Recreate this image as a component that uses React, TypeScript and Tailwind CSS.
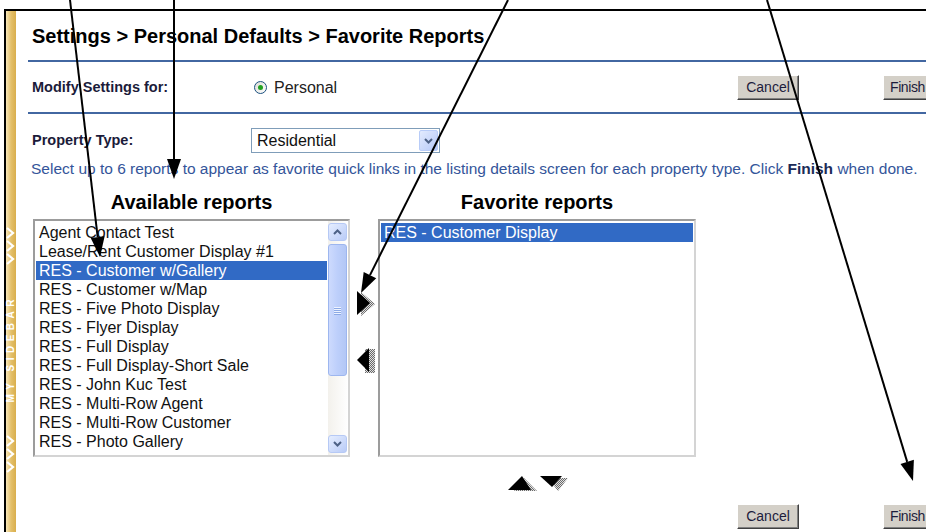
import React from "react";

const AVAILABLE = [
  "Agent Contact Test",
  "Lease/Rent Customer Display #1",
  "RES - Customer w/Gallery",
  "RES - Customer w/Map",
  "RES - Five Photo Display",
  "RES - Flyer Display",
  "RES - Full Display",
  "RES - Full Display-Short Sale",
  "RES - John Kuc Test",
  "RES - Multi-Row Agent",
  "RES - Multi-Row Customer",
  "RES - Photo Gallery",
];

const FAVORITES = ["RES - Customer Display"];

// Callout lines drawn across the page
const CALLOUTS = [
  { x1: 70, y1: 0, x2: 100, y2: 257 },
  { x1: 174, y1: 0, x2: 174, y2: 179 },
  { x1: 508, y1: 0, x2: 361, y2: 293 },
  { x1: 767, y1: 0, x2: 913, y2: 481 },
];

function Callouts() {
  const L = 20;
  const W = 7;
  return (
    <svg className="absolute inset-0 pointer-events-none" width={926} height={532}>
      {CALLOUTS.map((c, i) => {
        const dx = c.x2 - c.x1;
        const dy = c.y2 - c.y1;
        const len = Math.hypot(dx, dy);
        const ux = dx / len;
        const uy = dy / len;
        const bx = c.x2 - ux * L;
        const by = c.y2 - uy * L;
        const nx = -uy;
        const ny = ux;
        const pts = `${c.x2},${c.y2} ${bx + nx * W},${by + ny * W} ${bx - nx * W},${by - ny * W}`;
        return (
          <g key={i}>
            <line x1={c.x1} y1={c.y1} x2={bx} y2={by} stroke="#000" strokeWidth={2} />
            <polygon points={pts} fill="#000" />
          </g>
        );
      })}
    </svg>
  );
}

function Chevrons() {
  return (
    <svg width={10} height={40} viewBox="0 0 10 40">
      {[0, 13, 26].map((y) => (
        <polyline key={y} points={`1,${y + 2} 7,${y + 7} 1,${y + 12}`} fill="none" stroke="#fff" strokeWidth={2.2} />
      ))}
    </svg>
  );
}

function Sidebar() {
  return (
    <div className="w-[10px] shrink-0 bg-gradient-to-r from-[#f6e6b8] via-[#e4c06a] to-[#d9ae4c] flex flex-col items-center pt-[215px]">
      <Chevrons />
      <div className="mt-[22px] h-[122px] flex items-center justify-center">
        <span className="[writing-mode:vertical-rl] rotate-180 text-white font-bold text-[10px] tracking-[4.5px] leading-[10px] whitespace-nowrap">
          MY SIDEBAR
        </span>
      </div>
      <div className="mt-[24px]">
        <Chevrons />
      </div>
    </div>
  );
}

function XpButton({ label, tight }: { label: string; tight?: boolean }) {
  return (
    <div
      className={
        tight
          ? "w-[62px] h-[25px] shrink-0 bg-[#d4d0c8] border border-t-white border-l-white border-r-[#404040] border-b-[#404040] shadow-[inset_-1px_-1px_0_#808080] flex items-center justify-start pl-[6px] text-[14px] tracking-[-0.4px] text-[#1c1c3c]"
          : "w-[62px] h-[25px] shrink-0 bg-[#d4d0c8] border border-t-white border-l-white border-r-[#404040] border-b-[#404040] shadow-[inset_-1px_-1px_0_#808080] flex items-center justify-center text-[14px] text-[#1c1c3c]"
      }
    >
      {label}
    </div>
  );
}

function Radio() {
  return (
    <div className="w-[13px] h-[13px] rounded-full border border-[#1c5180] bg-gradient-to-br from-[#dcdcd6] to-white flex items-center justify-center">
      <div className="w-[5px] h-[5px] rounded-full bg-[#21a121]" />
    </div>
  );
}

function ScrollArrow({ up }: { up: boolean }) {
  return (
    <div className="h-[18px] rounded-[3px] border border-[#b6c9f5] bg-gradient-to-br from-[#e6eeff] to-[#b9cbf7] flex items-center justify-center">
      <svg width={9} height={6} viewBox="0 0 9 6">
        <polyline
          points={up ? "1,5 4.5,1.5 8,5" : "1,1 4.5,4.5 8,1"}
          fill="none"
          stroke="#4d6185"
          strokeWidth={2}
        />
      </svg>
    </div>
  );
}

function Scrollbar() {
  return (
    <div className="w-[19px] mr-[1px] shrink-0 flex flex-col bg-gradient-to-r from-[#f3f1ec] to-[#fefefe] pt-[2px] pb-[2px]">
      <ScrollArrow up />
      <div className="mt-[3px] h-[132px] rounded-[3px] border border-[#9db6ef] bg-gradient-to-r from-[#cddafd] via-[#bdcffb] to-[#b3c7f5] flex flex-col items-center justify-center gap-[1px]">
        {[0, 1, 2, 3].map((i) => (
          <div key={i} className="w-[7px] h-[1px] bg-[#eef3ff] shadow-[0_1px_0_#8caae6]" />
        ))}
      </div>
      <div className="flex-1" />
      <ScrollArrow up={false} />
    </div>
  );
}

function ListItems({ items, selected }: { items: string[]; selected: string }) {
  return (
    <div className="flex-1 pt-[2px] pl-[1px] pr-[1px]">
      {items.map((t) => (
        <div
          key={t}
          className={
            t === selected
              ? "h-[19px] leading-[19px] pl-[3px] text-[16px] whitespace-nowrap bg-[#316ac5] text-white"
              : "h-[19px] leading-[19px] pl-[3px] text-[16px] whitespace-nowrap text-[#111]"
          }
        >
          {t}
        </div>
      ))}
    </div>
  );
}

// Shaded triangle used for the move buttons
function MoveArrow({ dir }: { dir: "right" | "left" | "up" | "down" }) {
  const shapes: Record<string, { w: number; h: number; black: string; shade: string }> = {
    right: { w: 19, h: 26, black: "0,0 13,12 0,24", shade: "4,1 18,13 4,25" },
    left: { w: 19, h: 26, black: "0,12 12,0 12,24", shade: "8,1 18,1 18,25 8,25" },
    up: { w: 30, h: 16, black: "0,14 14,0 23,14", shade: "6,15 16,2 29,15" },
    down: { w: 30, h: 16, black: "0,0 22,0 12,11", shade: "8,2 28,2 18,15" },
  };
  const s = shapes[dir];
  const pid = `hatch-${dir}`;
  return (
    <svg width={s.w} height={s.h} viewBox={`0 0 ${s.w} ${s.h}`}>
      <defs>
        <pattern id={pid} width={2} height={2} patternUnits="userSpaceOnUse">
          <rect width={2} height={2} fill="#e0e0e0" />
          <rect width={1} height={1} fill="#6a6a6a" />
          <rect x={1} y={1} width={1} height={1} fill="#6a6a6a" />
        </pattern>
      </defs>
      <polygon points={s.shade} fill={`url(#${pid})`} />
      <polygon points={s.black} fill="#000" />
    </svg>
  );
}

export default function App() {
  return (
    <div className="w-[926px] h-[532px] bg-white relative overflow-hidden font-['Liberation_Sans',Arial,sans-serif]">
      <div className="pt-[9px] pl-[4px]">
        <div className="h-[523px] border-t-2 border-l-2 border-black flex">
          <Sidebar />
          <div className="flex-1 min-w-0 flex flex-col">
            <div className="pt-[14px] pl-[16px] text-[20px] leading-[23px] font-bold text-black whitespace-nowrap">
              Settings &gt; Personal Defaults &gt; Favorite Reports
            </div>
            <div className="mt-[12px] ml-[12px] h-[2px] bg-[#4267a1]" />

            <div className="h-[50px] pt-[1px] pl-[16px] flex items-center whitespace-nowrap">
              <div className="w-[222px] shrink-0 text-[14.5px] font-bold text-[#1b1b3a]">Modify Settings for:</div>
              <div className="w-[483px] shrink-0 flex items-center gap-[7px]">
                <Radio />
                <span className="text-[16px] text-[#222]">Personal</span>
              </div>
              <XpButton label="Cancel" />
              <div className="ml-[84px]">
                <XpButton label="Finish" tight />
              </div>
            </div>
            <div className="ml-[12px] h-[2px] bg-[#4267a1]" />

            <div className="mt-[14px] h-[25px] pl-[16px] flex items-center whitespace-nowrap">
              <div className="w-[219px] shrink-0 text-[14.5px] font-bold text-[#1b1b3a]">Property Type:</div>
              <div className="w-[189px] h-[25px] border border-[#7f9db9] bg-white flex items-center">
                <span className="flex-1 pl-[5px] text-[16px] text-[#111]">Residential</span>
                <div className="w-[19px] h-[21px] mr-[1px] rounded-[2px] border border-[#b8ccf8] bg-gradient-to-br from-[#e3ebfe] to-[#b6c9f7] flex items-center justify-center">
                  <svg width={9} height={6} viewBox="0 0 9 6">
                    <polyline points="1,1 4.5,4.5 8,1" fill="none" stroke="#4d6185" strokeWidth={2} />
                  </svg>
                </div>
              </div>
            </div>

            <div className="mt-[7px] pl-[15px] text-[15.5px] leading-[17px] text-[#34559a] whitespace-nowrap">
              Select up to 6 reports to appear as favorite quick links in the listing details screen for each property type. Click{" "}
              <b className="text-[#1b2b57]">Finish</b> when done.
            </div>

            <div className="mt-[14px] pl-[17px] flex text-[20px] leading-[23px] font-bold text-black">
              <div className="w-[317px] text-center">Available reports</div>
              <div className="w-[28px]" />
              <div className="w-[318px] text-center">Favorite reports</div>
            </div>

            <div className="mt-[5px] pl-[17px] flex">
              <div className="w-[317px] h-[238px] shrink-0 flex bg-white border-2 border-t-[#9c9c9c] border-l-[#9c9c9c] border-r-[#d4d4d4] border-b-[#d4d4d4]">
                <ListItems items={AVAILABLE} selected="RES - Customer w/Gallery" />
                <Scrollbar />
              </div>
              <div className="w-[28px] shrink-0 pl-[7px] pt-[72px] flex flex-col">
                <MoveArrow dir="right" />
                <div className="mt-[31px]">
                  <MoveArrow dir="left" />
                </div>
              </div>
              <div className="w-[318px] h-[238px] shrink-0 flex bg-white border-2 border-t-[#9c9c9c] border-l-[#9c9c9c] border-r-[#d4d4d4] border-b-[#d4d4d4]">
                <ListItems items={FAVORITES} selected="RES - Customer Display" />
              </div>
            </div>

            <div className="mt-[19px] ml-[492px] h-[16px] flex gap-[2px]">
              <MoveArrow dir="up" />
              <MoveArrow dir="down" />
            </div>

            <div className="mt-[12px] ml-[721px] flex">
              <XpButton label="Cancel" />
              <div className="ml-[84px]">
                <XpButton label="Finish" tight />
              </div>
            </div>
          </div>
        </div>
      </div>
      <Callouts />
    </div>
  );
}
